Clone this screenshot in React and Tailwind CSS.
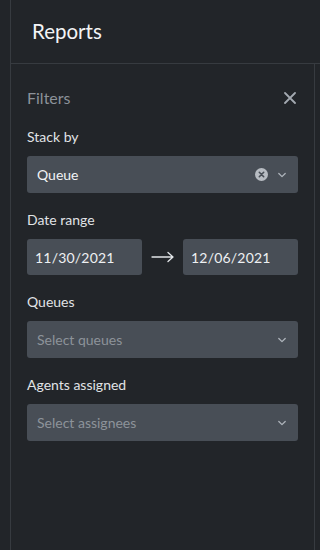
import React from 'react';

const Chevron = () => (
  <svg width="10" height="10" viewBox="0 0 10 10" className="text-[#aeb4bb]">
    <path d="M1.8 3.5 L5 6.6 L8.2 3.5" fill="none" stroke="currentColor" strokeWidth="1.3" strokeLinecap="round" strokeLinejoin="round" />
  </svg>
);

const ClearIcon = () => (
  <svg width="13" height="13" viewBox="0 0 13 13">
    <circle cx="6.5" cy="6.5" r="6.5" fill="#b7bcc2" />
    <path d="M4.3 4.3 L8.7 8.7 M8.7 4.3 L4.3 8.7" stroke="#484e56" strokeWidth="1.6" strokeLinecap="round" />
  </svg>
);

const Label = ({ children }) => (
  <div className="text-[14px] leading-[20px] text-[#e0e3e6] mb-[9px]">{children}</div>
);

const Select = ({ value, placeholder, clearable }) => (
  <div className="h-[37px] rounded-[3px] bg-[#484e56] flex items-center pl-[10px] pr-[11px]">
    <span className={value ? 'flex-1 text-[14px] text-[#f1f3f5]' : 'flex-1 text-[14px] text-[#8d939a]'}>
      {value || placeholder}
    </span>
    {clearable && (
      <span className="mr-[9px] flex items-center">
        <ClearIcon />
      </span>
    )}
    <Chevron />
  </div>
);

const DateBox = ({ value }) => (
  <div className="w-[115px] h-[36px] rounded-[3px] bg-[#484e56] flex items-center pl-[8px] text-[14px] text-[#eef0f2] tracking-[0.2px]">
    {value}
  </div>
);

export default function App() {
  return (
    <div
      className="w-[320px] h-[550px] bg-[#222529] flex overflow-hidden"
      style={{ fontFamily: 'Lato, "Noto Sans", sans-serif' }}
    >
      <div className="w-[11px] shrink-0 border-r border-[#373b40]" />
      <div className="flex-1 flex flex-col">
        <div className="h-[64px] shrink-0 border-b border-[#373b40] pl-[21px] pt-[17px]">
          <h1 className="text-[20.5px] leading-[28px] text-[#f3f4f6]">Reports</h1>
        </div>
        <div className="flex-1 flex">
          <div className="w-[304px] border-r border-[#373b40] px-[16px] pt-[22px]">
            <div className="flex items-center justify-between h-[24px] mb-[17px]">
              <span className="text-[16px] text-[#8c9299]">Filters</span>
              <svg width="12" height="12" viewBox="0 0 12 12" className="mr-[2px]">
                <path d="M1 1 L11 11 M11 1 L1 11" stroke="#a3a9b0" strokeWidth="1.8" strokeLinecap="round" />
              </svg>
            </div>

            <Label>Stack by</Label>
            <Select value="Queue" clearable />

            <div className="mt-[17px]">
              <Label>Date range</Label>
              <div className="flex items-center">
                <DateBox value="11/30/2021" />
                <div className="flex-1 flex justify-center">
                  <svg width="24" height="12" viewBox="0 0 24 12">
                    <path d="M1 6 H22 M17 1.5 L22 6 L17 10.5" fill="none" stroke="#e2e5e8" strokeWidth="1.3" strokeLinecap="round" strokeLinejoin="round" />
                  </svg>
                </div>
                <DateBox value="12/06/2021" />
              </div>
            </div>

            <div className="mt-[17px]">
              <Label>Queues</Label>
              <Select placeholder="Select queues" />
            </div>

            <div className="mt-[17px]">
              <Label>Agents assigned</Label>
              <Select placeholder="Select assignees" />
            </div>
          </div>
        </div>
      </div>
    </div>
  );
}
